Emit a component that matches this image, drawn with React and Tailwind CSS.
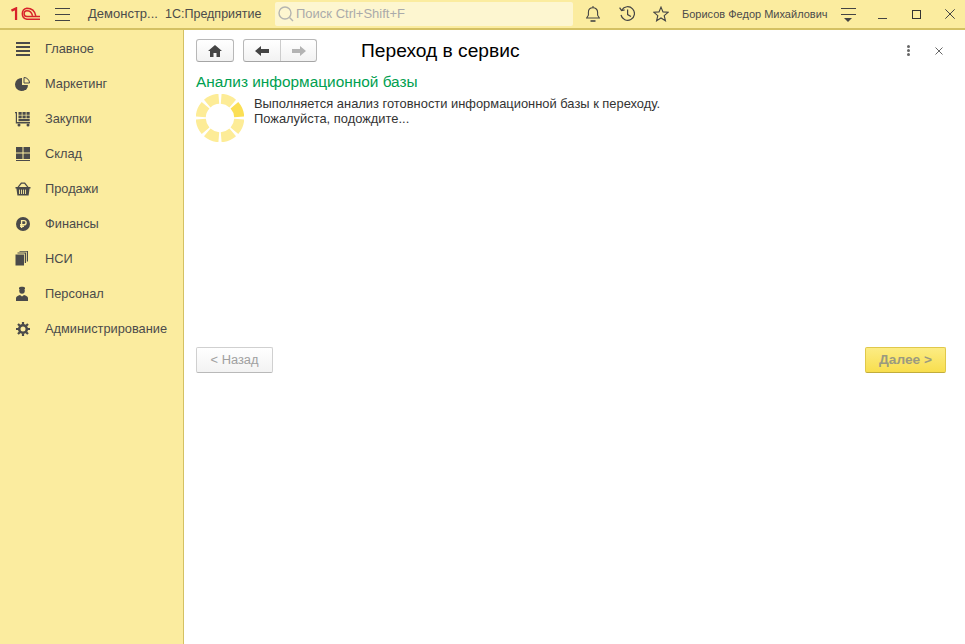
import React from "react";

function Logo() {
    return (
        <svg width="31" height="14" viewBox="0 0 31 14" fill="none" stroke="#d8232a" strokeWidth="1.6" className="block">
            <path d="M0.5 3.4 L5.4 1 V13.5" strokeWidth="2.4" />
            <path d="M31 12.6 H17 A6 6 0 0 1 17 0.8 C21.5 0.8 25.5 3.6 26.5 9" />
            <path d="M31 9.6 H17 A3 3 0 0 1 17 3.6 C19.5 3.6 22 5 23 8.8" />
        </svg>
    );
}

function MenuIcon({ name }) {
    const c = "#4a4a4a";
    if (name === "main") {
        return (
            <svg width="16" height="14" viewBox="0 0 16 14" fill={c}>
                <rect x="1" y="0" width="14" height="2" />
                <rect x="1" y="4" width="14" height="2" />
                <rect x="1" y="8" width="14" height="2" />
                <rect x="1" y="12" width="14" height="2" />
            </svg>
        );
    }
    if (name === "marketing") {
        return (
            <svg width="16" height="14" viewBox="0 0 16 14" fill={c}>
                <path d="M7 1 A6.5 6.5 0 1 0 13 8 H7 Z" />
                <path d="M9 0.5 A5.5 5.5 0 0 1 14.5 6 H9 Z" fill="none" stroke={c} strokeWidth="1" />
                <path d="M9 13 L11 9.5 H13 L11 13 Z" />
            </svg>
        );
    }
    if (name === "purchases") {
        return (
            <svg width="16" height="16" viewBox="0 0 16 16" fill={c}>
                <path d="M0 1 H2 V11 H15 V12.5 H0.8 V2.2 H0 Z" />
                <rect x="3.5" y="1" width="3.2" height="2.8" />
                <rect x="7.5" y="1" width="3.2" height="2.8" />
                <rect x="11.5" y="1" width="3.2" height="2.8" />
                <rect x="3.5" y="4.5" width="3.2" height="2.8" />
                <rect x="7.5" y="4.5" width="3.2" height="2.8" />
                <rect x="11.5" y="4.5" width="3.2" height="2.8" />
                <rect x="3.5" y="8" width="11.2" height="2.2" />
                <circle cx="4" cy="14" r="1.5" />
                <circle cx="13" cy="14" r="1.5" />
            </svg>
        );
    }
    if (name === "stock") {
        return (
            <svg width="16" height="14" viewBox="0 0 16 14" fill={c}>
                <rect x="1" y="0" width="6.5" height="5.5" />
                <rect x="8.5" y="0" width="6.5" height="5.5" />
                <rect x="1" y="6.5" width="6.5" height="5.5" />
                <rect x="8.5" y="6.5" width="6.5" height="5.5" />
                <rect x="1" y="13" width="14" height="1" />
            </svg>
        );
    }
    if (name === "sales") {
        return (
            <svg width="16" height="14" viewBox="0 0 16 14" fill={c}>
                <path d="M2.5 5 L6 0.5 H10 L13.5 5 H12 L9.3 1.7 H6.7 L4 5 Z" />
                <path d="M0.5 5 H15.5 V6.6 H14.6 L13.6 13.5 H2.4 L1.4 6.6 H0.5 Z" />
                <path d="M4.5 7.6 V12 M6.5 7.6 V12 M8.5 7.6 V12 M10.5 7.6 V12" stroke="#fbec9f" strokeWidth="0.9" />
            </svg>
        );
    }
    if (name === "finance") {
        return (
            <svg width="16" height="16" viewBox="0 0 16 16">
                <circle cx="8" cy="8" r="7" fill={c} />
                <path d="M6.6 12 V4.6 H9 A2 2 0 0 1 9 8.8 H5 M5 10.4 H9" fill="none" stroke="#fbec9f" strokeWidth="1.4" />
            </svg>
        );
    }
    if (name === "nsi") {
        return (
            <svg width="14" height="15" viewBox="0 0 14 15" fill={c}>
                <rect x="0.5" y="3.5" width="8.5" height="11" />
                <path d="M2.5 2.6 V1.6 H11 V12 H9.8 V2.6 Z" />
                <path d="M4.5 0.8 V0 H13 V10.5 H11.8 V0.8 Z" />
            </svg>
        );
    }
    if (name === "staff") {
        return (
            <svg width="14" height="15" viewBox="0 0 14 15" fill={c}>
                <path d="M4 1.8 C4.5 0.5 9.5 0.5 10 1.8 V3 H4 Z" />
                <ellipse cx="7" cy="4.8" rx="2.8" ry="3" />
                <path d="M1 15 V12 C1 10.5 3 9.6 5 9 L7 10.5 L9 9 C11 9.6 13 10.5 13 12 V15 Z" />
            </svg>
        );
    }
    return (
        <svg width="16" height="16" viewBox="0 0 16 16" fill="none" stroke={c}>
            <circle cx="8" cy="8" r="3.8" strokeWidth="2.6" />
            <path d="M8 1 V3.5 M8 12.5 V15 M1 8 H3.5 M12.5 8 H15 M3 3 L4.8 4.8 M11.2 11.2 L13 13 M13 3 L11.2 4.8 M4.8 11.2 L3 13" strokeWidth="2.2" />
        </svg>
    );
}

const menu = [
    ["main", "Главное"],
    ["marketing", "Маркетинг"],
    ["purchases", "Закупки"],
    ["stock", "Склад"],
    ["sales", "Продажи"],
    ["finance", "Финансы"],
    ["nsi", "НСИ"],
    ["staff", "Персонал"],
    ["admin", "Администрирование"],
];

function Spinner() {
    const segs = [];
    for (let i = 0; i < 8; i++) {
        segs.push(
            <path
                key={i}
                d="M-7.8 -23 A24 24 0 0 1 7.8 -23 L4.7 -13.4 A14 14 0 0 0 -4.7 -13.4 Z"
                fill={i === 1 ? "#fbdf55" : "#fdec97"}
                transform={`rotate(${i * 45})`}
            />
        );
    }
    return (
        <svg width="48" height="48" viewBox="-24 -24 48 48" className="shrink-0">
            <g transform="rotate(22.5)">{segs}</g>
        </svg>
    );
}

export default function App() {
    return (
        <div className="h-[644px] w-[965px] overflow-hidden bg-white flex flex-col text-[12.8px] text-[#4b4b4b] font-['Liberation_Sans',Arial,sans-serif]">
            {/* top bar */}
            <header className="h-[30px] shrink-0 flex items-center bg-[#fbec9f] border-b-2 border-[#d4c163]">
                <div className="w-[40px] pl-[11px] flex items-center"><Logo /></div>
                <div className="w-[48px] pl-[15px] flex flex-col gap-[5px]">
                    <span className="block h-px w-[15px] bg-[#444]" />
                    <span className="block h-px w-[15px] bg-[#444]" />
                    <span className="block h-px w-[15px] bg-[#444]" />
                </div>
                <span className="w-[77px] text-[13px] whitespace-nowrap">Демонстр...</span>
                <span className="w-[110px] text-[12.5px] whitespace-nowrap">1С:Предприятие</span>
                <div className="w-[298px] h-[24px] rounded-[2px] bg-[#fdf6d0] flex items-center pl-[2px] text-[13px] text-[#aaa]">
                    <svg width="18" height="18" viewBox="0 0 18 18" fill="none" stroke="#b5b5b0" strokeWidth="1.4">
                        <circle cx="8" cy="8" r="6" />
                        <path d="M12.5 12.5 L16 16" />
                    </svg>
                    <span className="ml-[1px]">Поиск Ctrl+Shift+F</span>
                </div>
                <div className="ml-[7px] w-[26px] flex justify-center">
                    <svg width="14" height="16" viewBox="0 0 14 16" fill="none" stroke="#444" strokeWidth="1.1">
                        <path d="M0.6 12 H13.4 L11.6 9.2 V6.2 C11.6 3.6 9.6 1.8 7 1.8 C4.4 1.8 2.4 3.6 2.4 6.2 V9.2 Z" />
                        <path d="M7 0 V1.8" />
                        <path d="M4.5 15 H9.5" strokeWidth="1.6" />
                    </svg>
                </div>
                <div className="ml-[8px] w-[26px] flex justify-center">
                    <svg width="16" height="16" viewBox="0 0 16 16" fill="none" stroke="#444" strokeWidth="1.2">
                        <path d="M2.8 4 A6.8 6.8 0 1 1 2 9" />
                        <path d="M0.6 1.6 L2.6 4.6 L5.6 3.8" />
                        <path d="M8.6 3.6 V8.6 L12 10.6" />
                    </svg>
                </div>
                <div className="ml-[8px] w-[26px] flex justify-center">
                    <svg width="16" height="16" viewBox="0 0 17 17" fill="none" stroke="#444" strokeWidth="1.2">
                        <path d="M8.5 1.2 L10.6 6.3 L16 6.7 L11.9 10.2 L13.2 15.6 L8.5 12.7 L3.8 15.6 L5.1 10.2 L1 6.7 L6.4 6.3 Z" />
                    </svg>
                </div>
                <span className="ml-[8px] w-[158px] text-[11px] whitespace-nowrap">Борисов Федор Михайлович</span>
                <div className="w-[16px] mt-[2px] flex flex-col items-center">
                    <span className="block h-px w-[15px] bg-[#444]" />
                    <span className="block mt-[5px] h-px w-[15px] bg-[#444]" />
                    <span className="block mt-[3px] border-x-[4px] border-t-[4px] border-x-transparent border-t-[#444]" />
                </div>
                <div className="ml-[22px] w-[9px] h-[10px] flex items-end">
                    <span className="block h-[1.5px] w-[9px] bg-[#444]" />
                </div>
                <div className="ml-[25px] w-[9px] h-[9px] border border-[#333]" />
                <div className="ml-[24px]">
                    <svg width="10" height="10" viewBox="0 0 10 10" stroke="#444" strokeWidth="1" className="block">
                        <path d="M0.3 0.3 L9.7 9.7 M9.7 0.3 L0.3 9.7" />
                    </svg>
                </div>
            </header>

            <div className="flex-1 flex min-h-0">
                {/* sidebar */}
                <nav className="w-[184px] shrink-0 bg-[#fbec9f] border-r border-[#d4c163] pt-[1px]">
                    {menu.map(([icon, label]) => (
                        <div key={icon} className="h-[35px] flex items-center">
                            <div className="w-[45px] pl-[15px] flex items-center"><MenuIcon name={icon} /></div>
                            <span>{label}</span>
                        </div>
                    ))}
                </nav>

                {/* form */}
                <main className="flex-1 min-w-0 pl-[12px] pr-[19px] pt-[9px]">
                    <div className="h-[23px] flex items-center">
                        <button className="w-[38px] h-[23px] rounded-[3px] border border-[#b8b8b8] border-b-[#a5a5a5] bg-[linear-gradient(#ffffff,#f2f2f2)] flex items-center justify-center">
                            <svg width="14" height="12" viewBox="0 0 14 12" fill="#444">
                                <path d="M7 0 L14 6 H12 V12 H8.5 V8 H5.5 V12 H2 V6 H0 Z" />
                            </svg>
                        </button>
                        <div className="ml-[9px] w-[74px] h-[23px] rounded-[3px] border border-[#b8b8b8] border-b-[#a5a5a5] bg-[linear-gradient(#ffffff,#f2f2f2)] flex">
                            <div className="w-[37px] border-r border-[#ccc] flex items-center justify-center">
                                <svg width="14" height="10" viewBox="0 0 14 10" fill="#444"><path d="M0 5 L6 0 V3 H14 V7 H6 V10 Z" /></svg>
                            </div>
                            <div className="flex-1 flex items-center justify-center">
                                <svg width="14" height="10" viewBox="0 0 14 10" fill="#b3b3b3"><path d="M14 5 L8 0 V3 H0 V7 H8 V10 Z" /></svg>
                            </div>
                        </div>
                        <h1 className="ml-[44px] text-[19.2px] leading-[23px] text-black">Переход в сервис</h1>
                        <div className="ml-auto flex items-center">
                            <div className="flex flex-col gap-[1px]">
                                <span className="block w-[3px] h-[3px] rounded-full bg-[#666]" />
                                <span className="block w-[3px] h-[3px] rounded-full bg-[#666]" />
                                <span className="block w-[3px] h-[3px] rounded-full bg-[#666]" />
                            </div>
                            <svg className="ml-[25px] mr-[3px]" width="8" height="8" viewBox="0 0 8 8" stroke="#555" strokeWidth="0.9">
                                <path d="M0.5 0.5 L7.5 7.5 M7.5 0.5 L0.5 7.5" />
                            </svg>
                        </div>
                    </div>

                    <h2 className="mt-[11px] text-[15.4px] leading-[18px] text-[#00a050]">Анализ информационной базы</h2>
                    <div className="mt-[3px] flex">
                        <Spinner />
                        <div className="ml-[10px] mt-[2px] text-[12.9px] leading-[15px] text-[#333]">
                            <p>Выполняется анализ готовности информационной базы к переходу.</p>
                            <p>Пожалуйста, подождите...</p>
                        </div>
                    </div>

                    <div className="mt-[205px] flex justify-between">
                        <button className="w-[77px] h-[26px] rounded-[2px] border border-[#d0d0d0] border-b-[#b9b9b9] bg-[linear-gradient(#ffffff,#f3f3f3)] text-[#a0a0a0] text-[12.85px]">&lt; Назад</button>
                        <button className="w-[81px] h-[26px] rounded-[2px] border border-[#e0c84a] border-b-[#c2ad3c] bg-[linear-gradient(#fcec84,#f8de4e)] text-[#9a9a80] text-[13.7px] font-bold">Далее &gt;</button>
                    </div>
                </main>
            </div>
        </div>
    );
}
